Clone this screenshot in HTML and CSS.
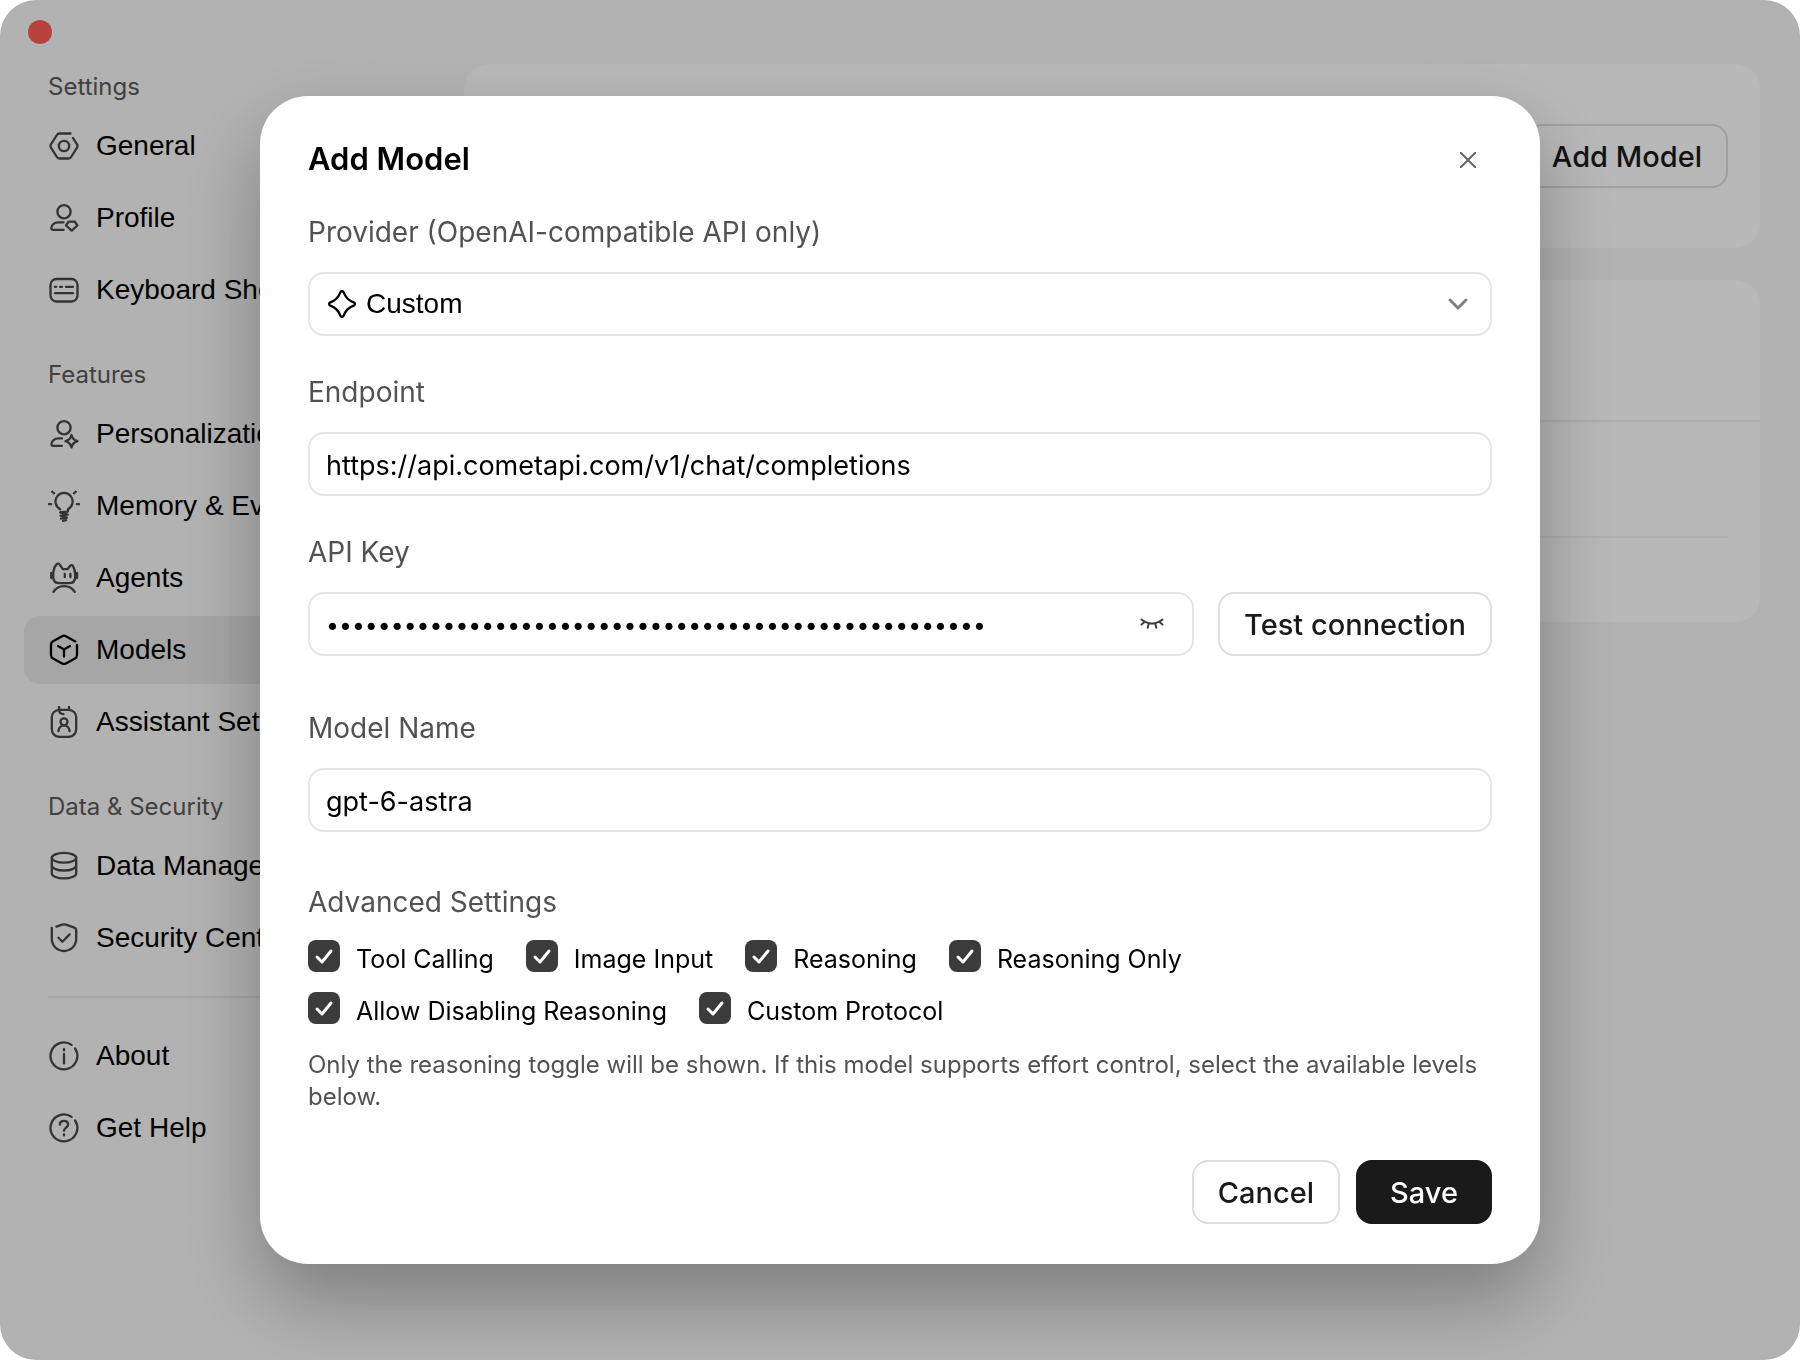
FILE: index.html
```html
<!DOCTYPE html>
<html lang="en">
<head>
    <meta charset="UTF-8">
    <meta name="viewport" content="width=device-width, initial-scale=1.0">
    <title>Settings</title>
    <link rel="stylesheet" href="styles.css">
</head>
<body>
    <div class="window">
        <aside class="sidebar">
            <button class="window-close" aria-label="Close window"></button>
            <nav>
                <h2 class="nav-title">Settings</h2>
                <ul class="nav-list">
                    <li><a class="nav-item" href="#general">
                        <svg class="icon" viewBox="0 0 32 32"><path d="M22.500 3.500H11.500a3 3 0 0 0-2.600 1.500L2.800 14.600a3 3 0 0 0 0 2.800L8.900 27a3 3 0 0 0 2.600 1.500h9a3 3 0 0 0 2.600-1.500l6.100-9.600a3 3 0 0 0 0-2.800L25 8"/><circle cx="16" cy="16" r="5.200"/></svg>
                        General</a></li>
                    <li><a class="nav-item" href="#profile">
                        <svg class="icon" viewBox="0 0 32 32"><circle cx="16" cy="9.7" r="6.600"/><path d="M15.500 20.400h-5.300c-3.800 0-6.900 2.600-6.900 5.400 0 1.400.7 2 2 2h10.400"/><path d="M20.600 19.600h6.200l2.600 3.900-5.700 5.100-5.700-5.100z"/></svg>
                        Profile</a></li>
                    <li><a class="nav-item" href="#shortcuts">
                        <svg class="icon" viewBox="0 0 32 32"><rect x="2.500" y="5" width="27" height="22.500" rx="6"/><path d="M6.800 12.800h1.400M12 12.800h2M18 12.800h7M7 19.200h18"/></svg>
                        Keyboard Shortcuts</a></li>
                </ul>
                <h2 class="nav-title">Features</h2>
                <ul class="nav-list">
                    <li><a class="nav-item" href="#personalization">
                        <svg class="icon" viewBox="0 0 32 32"><circle cx="16" cy="9.700" r="6.600"/><path d="M14 20.400h-3.400c-4 0-7.200 2.800-7.200 5.600 0 1.200.6 1.800 1.800 1.800H14"/><path d="M23.500 17c.9 3.700 2.300 5.200 6 6.200-3.700 1.100-5.100 2.600-6 6.200-.9-3.600-2.300-5.100-6-6.200 3.700-1 5.100-2.500 6-6.200z"/></svg>
                        Personalization</a></li>
                    <li><a class="nav-item" href="#memory">
                        <svg class="icon" viewBox="0 0 32 32"><path d="M12.200 19.200a8.600 8.600 0 1 1 7.700 0v2.400l-6.800.6"/><path d="M12.600 25.600l6.800-1M12.200 22.400l7.400 2.200M13 28.600l5.800-1M12.800 25.600l6 2.200M15 30.800l3-.6M.8 14.200h2.400M28.800 14.200h2.400M4.200 1.700l1.800 1.600M27.800 1.700l-1.800 1.600"/></svg>
                        Memory &amp; Evolution</a></li>
                    <li><a class="nav-item" href="#agents">
                        <svg class="icon" viewBox="0 0 32 32"><path d="M5.200 13c0-4.500.8-7.800 3.400-10.600.9-1 2.200-1 3 0l3.200 4.800h4.700l2.700-3.400c.8-.9 2-.9 2.700 0 1.600 2.600 2.300 5.500 2.300 9.200v2c0 4-2.200 6.200-6.200 6.200h-9.600c-4 0-6.200-2.200-6.200-6.200z"/><path d="M3.200 11v5M29 11v5M16.800 11.800v3.400M22.400 11.800v3.400"/><path d="M5.400 29.800c5-7.600 16.400-7.600 21.400 0"/></svg>
                        Agents</a></li>
                    <li><a class="nav-item active" href="#models">
                        <svg class="icon" viewBox="0 0 32 32"><path d="M27.300 7.400L17.900 2.200a4 4 0 0 0-3.800 0L5 7.200a4 4 0 0 0-2 3.500v10.200a4 4 0 0 0 2 3.500l9.100 5a4 4 0 0 0 3.800 0l9.100-5a4 4 0 0 0 2-3.500V10.900"/><path d="M10 12l6 3.400 6-3.400M16 15.400v7.200"/></svg>
                        Models</a></li>
                    <li><a class="nav-item" href="#assistant">
                        <svg class="icon" viewBox="0 0 32 32"><rect x="3.800" y="3.800" width="24.400" height="27" rx="7.500"/><path d="M11 .8v3.400c.3 2.600 2 3.900 4.600 3.900M21 .8v3"/><circle cx="16" cy="15.800" r="3.500"/><path d="M10.400 25c.6-3.300 2.800-5.600 5.600-5.600s5 2.300 5.600 5.600"/></svg>
                        Assistant Settings</a></li>
                </ul>
                <h2 class="nav-title">Data &amp; Security</h2>
                <ul class="nav-list">
                    <li><a class="nav-item" href="#data">
                        <svg class="icon" viewBox="0 0 32 32"><ellipse cx="16" cy="7.800" rx="12.200" ry="4.900"/><path d="M3.800 7.800v15.700c0 2.700 5.500 4.900 12.200 4.900s12.200-2.200 12.200-4.900V7.800M3.800 15.600c0 2.700 5.500 4.900 12.200 4.900s12.200-2.200 12.200-4.900"/></svg>
                        Data Management</a></li>
                    <li><a class="nav-item" href="#security">
                        <svg class="icon" viewBox="0 0 32 32"><path d="M8.400 4.600l5.800-1.900a6 6 0 0 1 3.600 0l8 2.600a3.400 3.400 0 0 1 2.400 3.200v8.300c0 7-5.400 12.200-12.200 12.200S3.800 23.800 3.800 16.800V6"/><path d="M10.400 15.800l4 4 7.200-7.400"/></svg>
                        Security Center</a></li>
                </ul>
                <hr class="nav-divider">
                <ul class="nav-list">
                    <li><a class="nav-item" href="#about">
                        <svg class="icon" viewBox="0 0 32 32"><path d="M23.600 4.900A13.400 13.400 0 1 0 27.100 8.500"/><path d="M16 14v9.500M16 9v1.600"/></svg>
                        About</a></li>
                    <li><a class="nav-item" href="#help">
                        <svg class="icon" viewBox="0 0 32 32"><path d="M23.600 4.900A13.400 13.400 0 1 0 27.100 8.500"/><path d="M11.900 12.700c0-2.400 1.700-3.900 4.100-3.900s4.100 1.500 4.100 3.700c0 3.200-4.100 3.200-4.100 6.300M16 22.400v1.200"/></svg>
                        Get Help</a></li>
                </ul>
            </nav>
        </aside>
        <main class="content">
            <section class="card card-header">
                <button class="btn">Add Model</button>
            </section>
            <section class="card">
                <div class="card-row card-top"></div>
                <div class="card-row card-middle"></div>
                <div class="card-row card-bottom"></div>
            </section>
        </main>
    </div>

    <div class="overlay">
        <form class="modal" role="dialog" aria-labelledby="modal-title">
            <header class="modal-header">
                <h1 id="modal-title">Add Model</h1>
                <button class="icon-btn" type="button" aria-label="Close">
                    <svg class="close-icon" viewBox="0 0 16 16"><path d="M.7.7l14.600 14.600M15.300.7L.7 15.300"/></svg>
                </button>
            </header>

            <div class="field">
                <label for="provider">Provider (OpenAI-compatible API only)</label>
                <div class="control">
                    <svg class="spark-icon" viewBox="0 0 28 28"><path d="M12.300 2.300c.6-1.600 2.800-1.600 3.400 0 1.700 4.800 5.200 8.300 10 10 1.600.6 1.600 2.800 0 3.400-4.800 1.700-8.300 5.200-10 10-.6 1.600-2.800 1.600-3.400 0-1.700-4.800-5.200-8.300-10-10-1.600-.6-1.600-2.800 0-3.400 4.800-1.700 8.300-5.200 10-10z"/></svg>
                    <select id="provider" class="input select">
                        <option>Custom</option>
                    </select>
                    <svg class="chevron-icon" viewBox="0 0 20 12"><path d="M2 2l8 8 8-8"/></svg>
                </div>
            </div>

            <div class="field">
                <label for="endpoint">Endpoint</label>
                <input id="endpoint" class="input" type="text" value="https://api.cometapi.com/v1/chat/completions">
            </div>

            <div class="field">
                <label for="api-key">API Key</label>
                <div class="key-row">
                    <div class="control">
                        <input id="api-key" class="input password" type="password" value="000000000000000000000000000000000000000000000000000">
                        <button class="eye-btn" type="button" aria-label="Show API key">
                            <svg class="eye-icon" viewBox="0 0 24 14"><path d="M1.500 2.500c6 5.200 15 5.200 21 0M4.600 5L1.500 7.600M19.400 5l3.100 2.600M8.800 6.400l-1.200 4.400M15.200 6.400l1.200 4.400"/></svg>
                        </button>
                    </div>
                    <button class="btn" type="button">Test connection</button>
                </div>
            </div>

            <div class="field field-spaced">
                <label for="model-name">Model Name</label>
                <input id="model-name" class="input" type="text" value="gpt-6-astra">
            </div>

            <fieldset class="advanced">
                <legend>Advanced Settings</legend>
                <div class="checks">
                    <label class="check"><input type="checkbox" checked>Tool Calling</label>
                    <label class="check"><input type="checkbox" checked>Image Input</label>
                    <label class="check"><input type="checkbox" checked>Reasoning</label>
                    <label class="check"><input type="checkbox" checked>Reasoning Only</label>
                    <label class="check"><input type="checkbox" checked>Allow Disabling Reasoning</label>
                    <label class="check"><input type="checkbox" checked>Custom Protocol</label>
                </div>
                <p class="hint">Only the reasoning toggle will be shown. If this model supports effort control, select the available levels below.</p>
            </fieldset>

            <footer class="modal-footer">
                <button class="btn" type="button">Cancel</button>
                <button class="btn btn-primary" type="submit">Save</button>
            </footer>
        </form>
    </div>
</body>
</html>
```
FILE: styles.css
```css
* {
    box-sizing: border-box;
}

body {
    margin: 0;
    background: #fff;
    color: #000;
    font-family: Inter, "Liberation Sans", sans-serif;
    font-size: 28px;
}

button,
input,
select {
    font-family: inherit;
    font-size: inherit;
}

svg {
    display: block;
    fill: none;
    stroke: currentColor;
    stroke-width: 2;
    stroke-linecap: round;
    stroke-linejoin: round;
}

/* Settings window */

.window {
    display: flex;
    min-height: 100vh;
    background: #f7f7f7;
    border-radius: 36px;
}

.sidebar {
    flex: none;
    width: 440px;
    padding: 20px 24px;
}

.window-close {
    display: block;
    width: 24px;
    height: 24px;
    margin: 0 4px;
    padding: 0;
    border: none;
    border-radius: 50%;
    background: #ff5c54;
}

.nav-title {
    margin: 0;
    padding: 37px 24px 11px;
    font-size: 24px;
    font-weight: 400;
    line-height: 28px;
    color: #595959;
}

.nav-title:first-child {
    padding-top: 29px;
}

.nav-list {
    display: flex;
    flex-direction: column;
    gap: 4px;
    margin: 0;
    padding: 0;
    list-style: none;
}

.nav-item {
    display: flex;
    align-items: center;
    gap: 16px;
    height: 68px;
    padding: 0 24px;
    border-radius: 16px;
    color: #000;
    font-family: "Liberation Sans", Arial, sans-serif;
    text-decoration: none;
    white-space: nowrap;
}

.nav-item.active {
    background: #e6e6e6;
}

.icon {
    width: 32px;
    height: 32px;
    color: #474747;
    stroke-width: 2.3;
}

.active .icon {
    color: #000;
}

.nav-divider {
    height: 2px;
    margin: 24px;
    border: none;
    background: #e6e6e6;
}

.content {
    flex: 1;
    display: flex;
    flex-direction: column;
    gap: 32px;
    padding: 64px 40px 64px 24px;
}

.card {
    background: #fff;
    border-radius: 24px;
}

.card-header {
    display: flex;
    justify-content: flex-end;
    padding: 60px 32px;
}

.card-row {
    border-bottom: 2px solid #f2f2f2;
}

.card-top {
    height: 142px;
}

.card-middle {
    height: 116px;
    margin: 0 32px;
}

.card-bottom {
    height: 84px;
    border: none;
}

/* Buttons */

.btn {
    height: 64px;
    padding: 0 24px;
    border: 2px solid #dedede;
    border-radius: 16px;
    background: #fff;
    color: #1a1a1a;
    font-size: 29px;
    font-weight: 500;
    white-space: nowrap;
}

.btn-primary {
    min-width: 136px;
    border-color: #1a1a1a;
    background: #1a1a1a;
    color: #fff;
}

/* Add model dialog */

.overlay {
    position: fixed;
    inset: 0;
    display: flex;
    align-items: center;
    justify-content: center;
    background: rgba(0, 0, 0, 0.28);
    border-radius: 36px;
}

.modal {
    width: 100%;
    max-width: 1280px;
    padding: 44px 48px 40px;
    background: #fff;
    border-radius: 48px;
    box-shadow: 0 36px 80px rgba(0, 0, 0, 0.3);
}

.modal-header {
    display: flex;
    align-items: flex-start;
    justify-content: space-between;
    margin-bottom: 36px;
}

.modal-header h1 {
    margin: 0;
    font-size: 31px;
    font-weight: 600;
    line-height: 38px;
}

.icon-btn,
.eye-btn {
    display: flex;
    align-items: center;
    justify-content: center;
    width: 48px;
    height: 40px;
    padding: 0;
    border: none;
    background: none;
}

.close-icon {
    width: 16px;
    height: 16px;
    color: #666;
}

.field {
    margin-bottom: 40px;
}

.field-spaced {
    margin: 56px 0 54px;
}

.field label {
    display: block;
    margin-bottom: 24px;
    line-height: 32px;
    color: #525252;
}

.input {
    display: block;
    width: 100%;
    height: 64px;
    padding: 2px 16px 0;
    border: 2px solid #e5e5e5;
    border-radius: 16px;
    background: #fff;
    color: #000;
    font-size: 27px;
    outline: none;
}

.control {
    position: relative;
    flex: 1;
}

.select {
    padding: 0 56px 2px;
    appearance: none;
    font-family: "Liberation Sans", Arial, sans-serif;
    font-size: 28px;
}

.spark-icon {
    position: absolute;
    top: 18px;
    left: 20px;
    width: 28px;
    height: 28px;
    stroke-width: 2.3;
}

.chevron-icon {
    position: absolute;
    top: 26px;
    right: 24px;
    width: 20px;
    height: 12px;
    color: #808080;
    stroke-width: 3;
    pointer-events: none;
}

.key-row {
    display: flex;
    gap: 24px;
}

.password {
    padding-right: 72px;
    font-size: 23px;
}

.eye-btn {
    position: absolute;
    top: 12px;
    right: 18px;
}

.eye-icon {
    width: 24px;
    height: 14px;
    color: #404040;
}

.advanced {
    margin: 0;
    padding: 0;
    border: none;
}

.advanced legend {
    padding: 0;
    margin-bottom: 22px;
    line-height: 32px;
    color: #525252;
}

.checks {
    display: flex;
    flex-wrap: wrap;
    gap: 20px 32px;
}

.check {
    display: flex;
    gap: 16px;
    height: 32px;
    font-size: 25px;
    line-height: 38px;
}

.check input {
    width: 32px;
    height: 32px;
    margin: 0;
    appearance: none;
    border-radius: 8px;
    background: #3b3b3b;
}

.check input:checked {
    background-image: url("data:image/svg+xml,%3Csvg xmlns='http://www.w3.org/2000/svg' viewBox='0 0 32 32'%3E%3Cpath d='M9 17l5 5 9-11' fill='none' stroke='%23fff' stroke-width='3' stroke-linecap='round' stroke-linejoin='round'/%3E%3C/svg%3E");
}

.hint {
    margin: 25px 0 47px;
    font-size: 24px;
    line-height: 32px;
    color: #525252;
}

.modal-footer {
    display: flex;
    justify-content: flex-end;
    gap: 16px;
}
```
